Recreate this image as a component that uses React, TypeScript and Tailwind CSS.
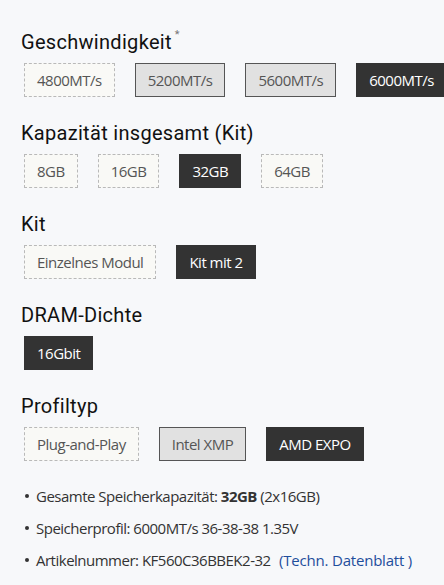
import React from 'react';

type Opt = { label: string; kind: 'dashed' | 'gray' | 'dark' };

const sections: { title: string; star?: boolean; options: Opt[] }[] = [
  {
    title: 'Geschwindigkeit',
    star: true,
    options: [
      { label: '4800MT/s', kind: 'dashed' },
      { label: '5200MT/s', kind: 'gray' },
      { label: '5600MT/s', kind: 'gray' },
      { label: '6000MT/s', kind: 'dark' },
    ],
  },
  {
    title: 'Kapazität insgesamt (Kit)',
    options: [
      { label: '8GB', kind: 'dashed' },
      { label: '16GB', kind: 'dashed' },
      { label: '32GB', kind: 'dark' },
      { label: '64GB', kind: 'dashed' },
    ],
  },
  {
    title: 'Kit',
    options: [
      { label: 'Einzelnes Modul', kind: 'dashed' },
      { label: 'Kit mit 2', kind: 'dark' },
    ],
  },
  {
    title: 'DRAM-Dichte',
    options: [{ label: '16Gbit', kind: 'dark' }],
  },
  {
    title: 'Profiltyp',
    options: [
      { label: 'Plug-and-Play', kind: 'dashed' },
      { label: 'Intel XMP', kind: 'gray' },
      { label: 'AMD EXPO', kind: 'dark' },
    ],
  },
];

const boxStyles = {
  dashed: 'border border-dashed border-[#b9b9b9] bg-[#f9f9f6] text-[#555]',
  gray: 'border border-[#555] bg-[#e1e1e1] text-[#555]',
  dark: 'border border-[#333] bg-[#333] text-white',
};

const OptionBox = ({ opt }: { opt: Opt }) => (
  <div
    className={`shrink-0 h-[34px] px-[12px] flex items-center text-[15px] tracking-[-0.5px] whitespace-nowrap ${boxStyles[opt.kind]}`}
  >
    {opt.label}
  </div>
);

export default function App() {
  return (
    <div
      className="w-[444px] h-[585px] overflow-hidden bg-[#f7f8fa] pl-[21px] pt-[28px]"
      style={{ fontFamily: '"Open Sans", "Noto Sans", sans-serif' }}
    >
      {sections.map((s) => (
        <div key={s.title} className="mb-[22px]">
          <h3
            className="text-[20px] leading-[28px] font-normal tracking-[0.3px] text-[#111] flex items-start"
            style={{ fontFamily: 'Roboto, sans-serif' }}
          >
            {s.title}
            {s.star && <span className="ml-[3px] text-[11px] leading-[14px] text-[#777]">*</span>}
          </h3>
          <div className="mt-[7px] pl-[3px] flex gap-[20px]">
            {s.options.map((o) => (
              <OptionBox key={o.label} opt={o} />
            ))}
          </div>
        </div>
      ))}

      <ul className="mt-[26px] pl-[4px] text-[15px] text-[#333] tracking-[-0.5px] flex flex-col gap-[14px] leading-[18px]">
        <li className="flex items-center gap-[7px]">
          <span className="w-[4px] h-[4px] rounded-full bg-[#333]" />
          <span>
            Gesamte Speicherkapazität: <b className="font-bold">32GB</b> (2x16GB)
          </span>
        </li>
        <li className="flex items-center gap-[7px]">
          <span className="w-[4px] h-[4px] rounded-full bg-[#333]" />
          <span>Speicherprofil: 6000MT/s 36-38-38 1.35V</span>
        </li>
        <li className="flex items-center gap-[7px]">
          <span className="w-[4px] h-[4px] rounded-full bg-[#333]" />
          <span>
            Artikelnummer: KF560C36BBEK2-32 <span className="ml-[5px] tracking-[-0.2px] text-[#1f4e9c]">(Techn. Datenblatt )</span>
          </span>
        </li>
      </ul>
    </div>
  );
}
